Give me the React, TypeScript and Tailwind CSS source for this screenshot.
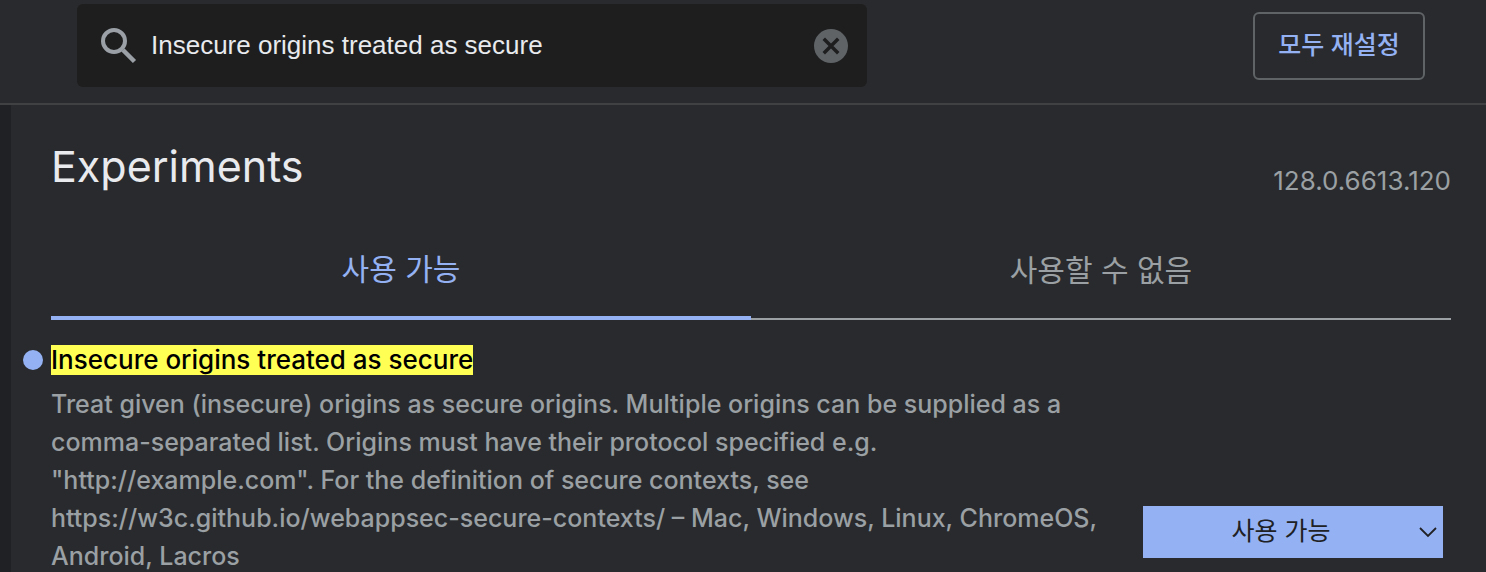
import React from "react";

export default function App() {
  return (
    <div className="flex min-h-screen flex-col bg-[#292a2d] font-['Inter','Noto_Sans_CJK_KR',sans-serif] text-[#9aa0a3]">
      <header className="flex items-start justify-between border-b-2 border-[#404143] pt-1 pr-[61px] pb-4 pl-[77px]">
        <div className="flex h-[83px] w-[790px] items-center rounded-md bg-[#1e1e1f] pr-4 pl-6">
          <svg className="size-9 shrink-0" viewBox="0 0 36 36" fill="none" stroke="#9aa0a6" aria-hidden="true">
            <circle cx="13" cy="13" r="11" strokeWidth="4" />
            <path d="M22 22 33.500 33.500" strokeWidth="4.500" />
          </svg>
          <input
            type="text"
            aria-label="Search flags"
            defaultValue="Insecure origins treated as secure"
            className="ml-3.5 min-w-0 grow bg-transparent font-['Liberation_Sans',sans-serif] text-[26px] text-[#e8eaed] outline-none"
          />
          <button type="button" aria-label="Clear search" className="size-10 shrink-0">
            <svg viewBox="0 0 40 40" aria-hidden="true">
              <circle cx="20" cy="20" r="17" fill="#5f6366" />
              <path d="m14 14 12 12M26 14 14 26" stroke="#1e1e1f" strokeWidth="3.500" strokeLinecap="square" />
            </svg>
          </button>
        </div>
        <button type="button" className="mt-2 h-[68px] w-[172px] rounded-md border-2 border-[#5f6366] text-[25px] font-medium text-[#94b2f3]">
          모두 재설정
        </button>
      </header>
      <div className="flex grow">
        <div className="w-[11px] shrink-0 bg-[#202124]" />
        <main className="min-w-0 grow pr-[35px] pl-10">
          <div className="flex items-end justify-between pt-7">
            <h1 className="text-[43px] leading-[66px] text-[#e8eaed]">Experiments</h1>
            <span className="text-[26px] leading-9">128.0.6613.120</span>
          </div>
          <div role="tablist" className="mt-6 grid h-[97px] grid-cols-2 text-[30px]">
            <button type="button" role="tab" aria-selected="true" className="border-b-4 border-[#94b2f3] text-[#94b2f3]">
              사용 가능
            </button>
            <button type="button" role="tab" aria-selected="false" className="border-b-2 border-[#9aa0a3]">
              사용할 수 없음
            </button>
          </div>
          <section className="mt-[25px] flex items-end justify-between pr-2">
            <div className="w-[1070px]">
              <h2 className="-ml-7 flex items-center gap-2 text-[26px] leading-[30px] font-medium">
                <span className="size-5 rounded-full bg-[#94b2f3]" />
                <mark id="flag-name" className="bg-[#ffff54] text-black">Insecure origins treated as secure</mark>
              </h2>
              <p className="mt-2.5 text-[25px] leading-[38px] font-medium">
                Treat given (insecure) origins as secure origins. Multiple origins can be supplied as a
                <br />
                comma-separated list. Origins must have their protocol specified e.g.
                <br />
                "http://example.com". For the definition of secure contexts, see
                <br />
                https://w3c.github.io/webappsec-secure-contexts/ – Mac, Windows, Linux, ChromeOS, Android, Lacros
              </p>
            </div>
            <div className="relative mb-[17px] w-[300px] shrink-0">
              <select
                aria-labelledby="flag-name"
                className="block h-[52px] w-full appearance-none bg-[#94b2f3] pr-6 text-center text-[25px] text-[#202124] [text-align-last:center]"
              >
                <option>사용 가능</option>
              </select>
              <svg className="pointer-events-none absolute top-5 right-1.5 w-[18px]" viewBox="0 0 18 12" fill="none" stroke="#202124" strokeWidth="1.800" aria-hidden="true">
                <path d="m1 2 8 8 8-8" />
              </svg>
            </div>
          </section>
        </main>
      </div>
    </div>
  );
}
